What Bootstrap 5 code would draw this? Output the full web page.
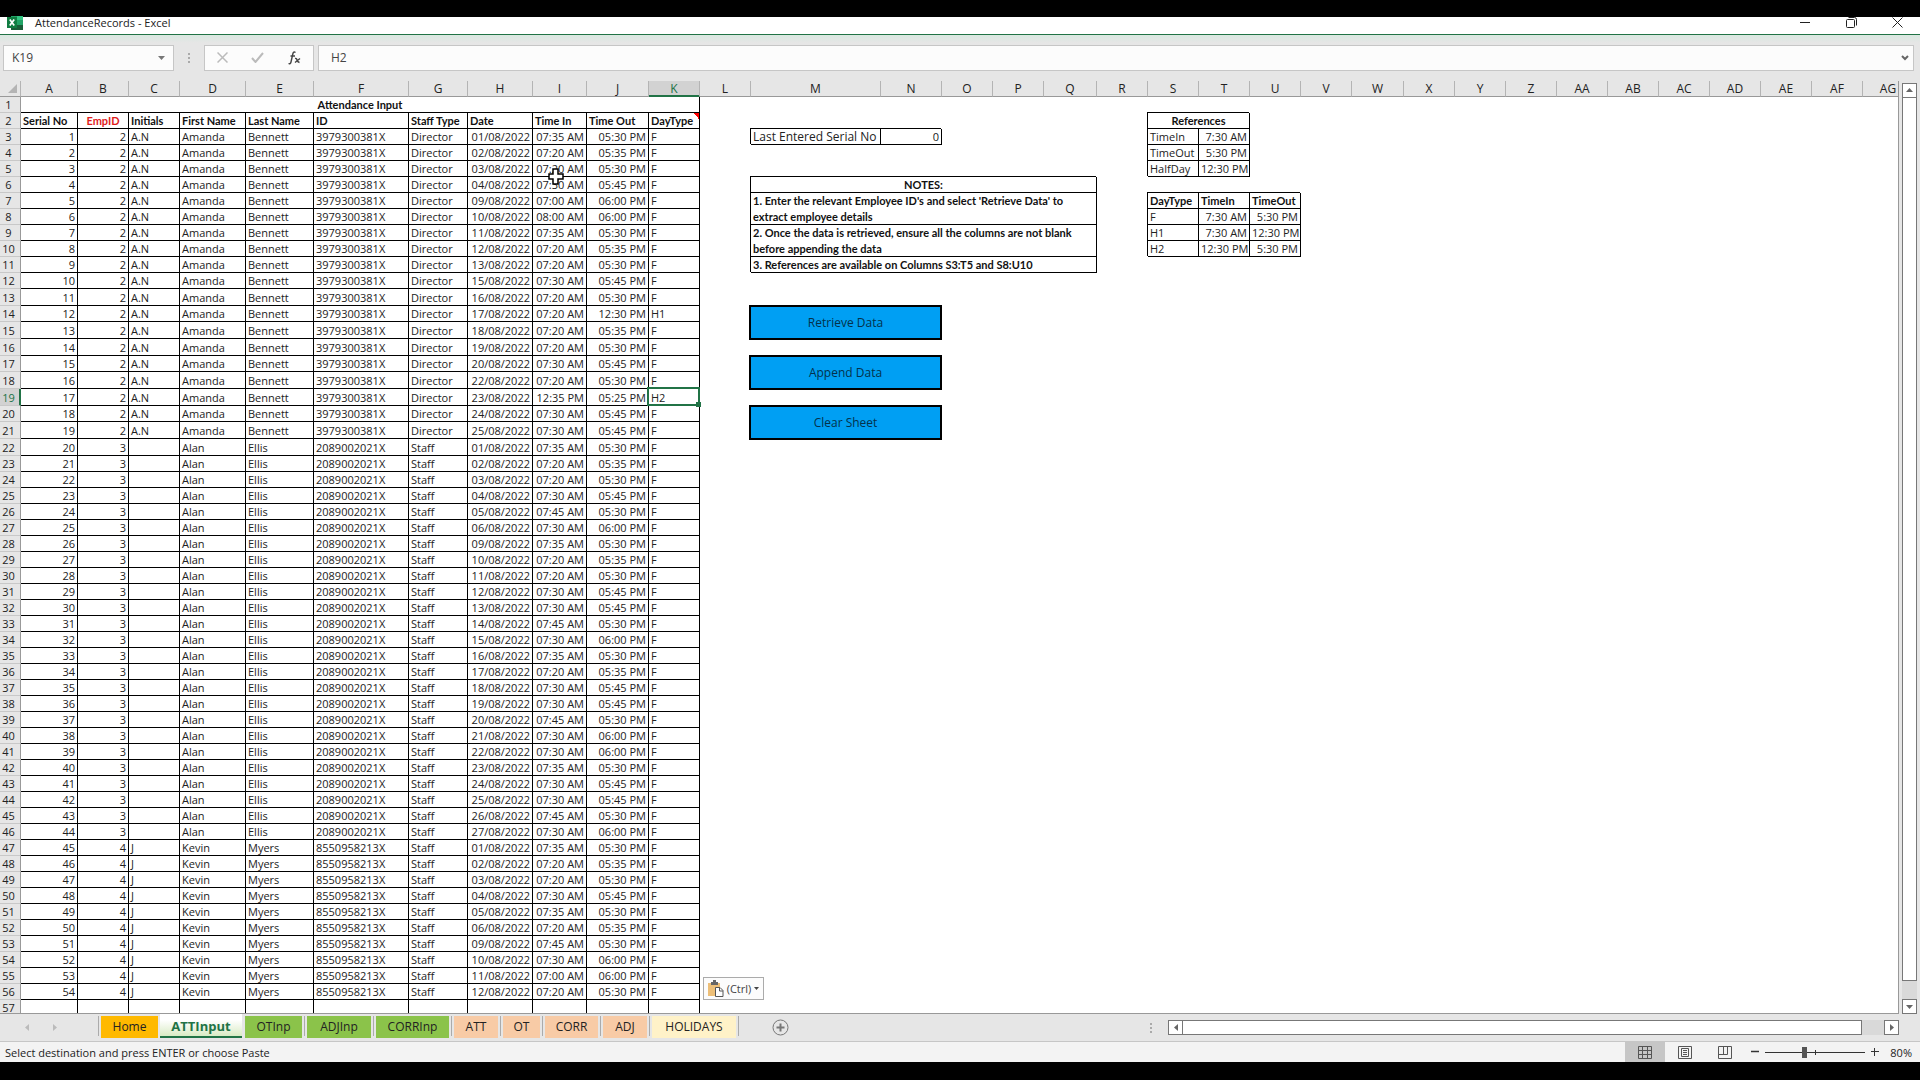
<!DOCTYPE html>
<html lang="en">
<head>
<meta charset="utf-8">
<meta name="viewport" content="width=device-width, initial-scale=1">
<title>AttendanceRecords - Excel</title>
<link href="https://cdn.jsdelivr.net/npm/bootstrap@5.3.0/dist/css/bootstrap.min.css" rel="stylesheet">
<script src="https://cdn.jsdelivr.net/npm/bootstrap@5.3.0/dist/js/bootstrap.bundle.min.js"></script>
<style>
  :root { --xl: #217346; --chrome: #e6e6e6; --edge: #999; }
  body { font: 11px/15px "Open Sans", "Noto Sans", sans-serif; color: #222; background: #000; padding: 17px 0 18px; }
  button { color: inherit; }
  .plain { border: 0; background: none; padding: 0; display: flex; align-items: center; justify-content: center; }
  .app { background: var(--chrome); }

  .titlebar { height: 18px; background: #fff; border-bottom: 1px solid var(--xl); padding: 0 8px 6px 7px; }
  .titlebar .plain { width: 46px; }
  .winbtns { margin-right: -8px; }
  .fxbar { padding: 10px 6px 10px 3px; height: 46px; background: linear-gradient(#d9e8e0, var(--chrome) 8px); }
  .fxbox { background: #fcfcfc; border: 1px solid #c6c6c6; }
  .fxbox input { border: 0; background: none; font-size: 12px; color: #444; outline: 0; min-width: 0; }
  .namebox { width: 171px; }
  .fxtools { width: 110px; }
  .gripdots { width: 30px; }

  .gridwrap { border-right: 1px solid var(--edge); border-bottom: 1px solid var(--edge); background: #fff; }
  .sheet { table-layout: fixed; width: 1914px; border-collapse: separate; border-spacing: 0; }
  .sheet th, .sheet td { padding: 0 2px; height: 16px; white-space: nowrap; font-weight: 400; vertical-align: bottom; overflow: hidden; }
  .sheet tr.tall > * { height: 17px; }
  .sheet thead th { background: var(--chrome); text-align: center; font-size: 12px; border-right: 1px solid #b4b4b4; border-bottom: 1px solid var(--edge); }
  .sheet thead th.active { background: #d2d2d2; color: var(--xl); border-bottom-color: var(--xl); box-shadow: inset 0 -1px var(--xl); }
  .sheet tbody th { background: var(--chrome); text-align: center; padding: 0 4px 0 1px; border-right: 1px solid var(--edge); border-bottom: 1px solid #c8c8c8; }
  .sheet tbody th.active { background: #d2d2d2; color: var(--xl); border-right: 2px solid var(--xl); padding-right: 3px; }
  .sheet .cellbox { border-right: 1px solid #000; border-bottom: 1px solid #000; }
  .sheet .side { box-shadow: -1px -1px 0 #000; }
  .sheet .hd { font-family: Lato, "Open Sans", sans-serif; font-weight: 700; color: #111; }
  .sheet .redhd { color: #e01b1b; }
  .sheet .wide { font-size: 12px; }
  .sheet .wraps { white-space: normal; vertical-align: top; }
  .wraps div { line-height: 16px; margin-bottom: -1px; }
  .sheet td.over { overflow: visible; position: relative; }
  .notemark { background: linear-gradient(to top right, transparent 50%, #f00 50%) no-repeat right top / 6px 6px; }
  .actioncell button { position: absolute; inset: -1px 0 -1px -2px; background: #009ff3; color: #04324c; border: 2px solid #000; font-size: 12px; border-radius: 0; padding: 0; }
  .cursel { position: absolute; inset: -2px -1px -1px -2px; border: 2px solid var(--xl); }
  .cursel::after { content: ""; position: absolute; right: -3px; bottom: -3px; width: 5px; height: 5px; background: var(--xl); }
  .pointer { position: absolute; left: 548px; top: 87px; }
  .pastebtn { position: absolute; left: 703px; bottom: 13px; height: 23px; width: 61px; background: #fcfcfc; border: 1px solid #ababab; font-size: 11px; color: #444; gap: 3px; }

  .vscroll { width: 21px; padding: 2px 3px 0 3px; }
  .sbtn { width: 15px; height: 15px; background: #fff; border: 1px solid #777; padding: 0; display: flex; align-items: center; justify-content: center; flex: none; }
  .strack { background: #d9d9d9; }
  .vthumb { background: #fff; border: 1px solid #777; margin-bottom: 18px; margin-top: -1px; }
  .hthumb { background: #fff; border: 1px solid #777; margin-right: 22px; margin-left: -1px; }
  .hscroll { width: 731px; margin-right: 21px; }

  .tabbar { height: 28px; border-bottom: 1px solid #c6c6c6; }
  .tabnav { width: 98px; padding-left: 25px; gap: 24px; }
  .tabs { list-style: none; margin: 0; padding: 0; }
  .tabs li { border-left: 1px solid #ababab; padding: 0 2px; height: 20px; margin: 2px 0 6px; display: flex; }
  .tabs li:last-child { border-right: 1px solid #ababab; }
  .tabs a { display: block; height: 22px; line-height: 22px; font-size: 12px; color: #222; text-decoration: none; text-align: center; }
  .tabs .home { background: #ffb900; width: 57px; }
  .tabs .green { background: #8bc34a; }
  .tabs .peach { background: #f8cba6; }
  .tabs .cream { background: #fff2c8; width: 84px; }
  .tabs li.on { border: 0; padding: 0; margin: -1px 0 0; }
  .tabs li.on + li { border-left-color: transparent; }
  .tabs .on a { height: 25px; line-height: 26px; width: 82px; font-size: 13px; font-weight: 700; color: var(--xl); border-bottom: 2px solid var(--xl); background: linear-gradient(#fff 30%, #d9ebc4); }
  .w57 { width: 57px; } .w64 { width: 64px; } .w73 { width: 73px; } .w44 { width: 44px; } .w37 { width: 37px; } .w53 { width: 53px; }
  .addtab { margin-left: 33px; }

  .statusbar { height: 20px; background: #f3f3f3; padding: 0 8px 0 5px; }
  .viewbtn { width: 40px; height: 20px; }
  .viewbtn.on { background: #c6c6c6; }
  .zoombtn { width: 20px; height: 20px; }
  .zoomer { appearance: none; width: 100px; height: 19px; margin: 0; background: linear-gradient(#333, #333) no-repeat center / 100% 1px, linear-gradient(#333, #333) no-repeat center / 1px 5px; }
  .zoomer::-webkit-slider-thumb { appearance: none; width: 5px; height: 11px; background: #555; }
  .zoomval { width: 27px; text-align: right; }
</style>
</head>
<body class="vh-100 overflow-hidden">
<div class="app h-100 d-flex flex-column">

  <header class="titlebar d-flex align-items-center">
    <svg width="16" height="14" viewBox="0 0 16 14" aria-hidden="true"><path fill="#21a366" d="M4 0h12v14H4z"/><path fill="#107c41" d="M4 4h6v5H4z"/><path fill="#33c481" d="M10 0h6v4h-6z"/><path fill="#185c37" d="M4 9h12v5H4z"/><path fill="#107c41" d="M0 1h10v11H0z"/><path stroke="#fff" stroke-width="1.7" d="M2.8 3.4l4.4 6.2M7.2 3.4L2.8 9.6"/></svg>
    <span class="ms-2 ps-1 flex-grow-1">AttendanceRecords - Excel</span>
    <div class="winbtns d-flex">
      <button class="plain" aria-label="Minimize"><svg width="11" height="11"><path d="M0 5.500h10" stroke="#222"/></svg></button>
      <button class="plain" aria-label="Restore"><svg width="11" height="11" fill="none" stroke="#222"><rect x=".5" y="2.500" width="8" height="8" rx="1"/><path d="M2.500 .5h6q2 0 2 2v6"/></svg></button>
      <button class="plain" aria-label="Close"><svg width="11" height="11"><path d="M.5.5l10 10M10.500.5l-10 10" stroke="#222"/></svg></button>
    </div>
  </header>

  <div class="fxbar d-flex">
    <div class="fxbox namebox d-flex align-items-center">
      <input class="flex-grow-1 ps-2" aria-label="Name box" value="K19">
      <button class="plain px-2" aria-label="Names"><svg width="7" height="4"><path d="M0 0h7L3.500 4z" fill="#777"/></svg></button>
    </div>
    <div class="gripdots d-flex align-items-center justify-content-center"><svg width="2" height="10" fill="#aaa"><path d="M0 0h2v2H0zM0 4h2v2H0zM0 8h2v2H0z"/></svg></div>
    <div class="fxbox fxtools d-flex align-items-center justify-content-around">
      <button class="plain" aria-label="Cancel"><svg width="11" height="11"><path d="M.5.5l10 10M10.500.5l-10 10" stroke="#bbb" stroke-width="1.500"/></svg></button>
      <button class="plain" aria-label="Enter"><svg width="13" height="11" fill="none"><path d="M1 6l3.500 4L12 1" stroke="#bbb" stroke-width="2"/></svg></button>
      <button class="plain" aria-label="Insert function"><svg width="13" height="14" fill="none" stroke="#444" stroke-width="1.400"><path d="M7.500 1.500Q5.500 0 4.800 3L3 11Q2.400 13.500.5 12.500M2.500 5h4.500M7 7.500q1.500-.5 2 1.500t2.500 2.500M12 7.500L7 11.500"/></svg></button>
    </div>
    <div class="fxbox flex-grow-1 d-flex align-items-center ms-1">
      <input class="flex-grow-1 ps-2 ms-1" aria-label="Formula bar" value="H2">
      <button class="plain px-1" aria-label="Expand formula bar"><svg width="8" height="6" fill="none"><path d="M1 1l3 3 3-3" stroke="#666" stroke-width="2"/></svg></button>
    </div>
  </div>

  <main class="flex-grow-1 d-flex overflow-hidden">
    <div class="gridwrap flex-grow-1 overflow-hidden position-relative">
      <table class="sheet"><colgroup id="cols"></colgroup><thead><tr id="letters"></tr></thead><tbody id="rows"></tbody></table>
      <svg class="pointer" width="16" height="17" viewBox="0 0 16 17"><path d="M5 1h5v5h5v5h-5v5H5v-5H1V6h4z" fill="#fff" stroke="#000" stroke-width="1.500"/></svg>
      <button class="pastebtn d-flex align-items-center justify-content-center p-0">
        <svg width="16" height="17" viewBox="0 0 16 17"><path fill="#edbf78" d="M0 3h12v13H0z"/><path fill="#666" d="M3 2h2V0h3v2h2v3H3z"/><path fill="#fff" stroke="#555" d="M7.500 7.500h4.500l3 3v6H7.500z"/><path fill="none" stroke="#555" d="M11.500 7.500v3.500H15"/></svg>
        <span>(Ctrl)</span><svg width="5" height="3"><path d="M0 0h5L2.500 3z" fill="#444"/></svg>
      </button>
    </div>
    <div class="vscroll d-flex flex-column">
      <button class="sbtn" aria-label="Scroll up"><svg width="7" height="4"><path d="M0 4h7L3.500 0z" fill="#666"/></svg></button>
      <div class="strack flex-grow-1 d-flex flex-column"><div class="vthumb flex-grow-1"></div></div>
      <button class="sbtn" aria-label="Scroll down"><svg width="7" height="4"><path d="M0 0h7L3.500 4z" fill="#666"/></svg></button>
    </div>
  </main>

  <nav class="tabbar d-flex align-items-start" aria-label="Sheets">
    <div class="tabnav d-flex h-100 align-items-center">
      <button class="plain" aria-label="Previous sheet"><svg width="4" height="7"><path d="M4 0v7L0 3.500z" fill="#bbb"/></svg></button>
      <button class="plain" aria-label="Next sheet"><svg width="4" height="7"><path d="M0 0v7l4-3.500z" fill="#bbb"/></svg></button>
    </div>
    <ul class="tabs d-flex">
      <li><a href="#" class="home">Home</a></li>
      <li class="on"><a href="#" aria-current="page">ATTInput</a></li>
      <li><a href="#" class="green w57">OTInp</a></li>
      <li><a href="#" class="green w64">ADJInp</a></li>
      <li><a href="#" class="green w73">CORRInp</a></li>
      <li><a href="#" class="peach w44">ATT</a></li>
      <li><a href="#" class="peach w37">OT</a></li>
      <li><a href="#" class="peach w53">CORR</a></li>
      <li><a href="#" class="peach w44">ADJ</a></li>
      <li><a href="#" class="cream">HOLIDAYS</a></li>
    </ul>
    <button class="plain addtab h-100" aria-label="New sheet"><svg width="17" height="17" fill="none" stroke="#777"><circle cx="8.500" cy="8.500" r="7.500"/><path d="M4.500 8.500h8M8.500 4.500v8" stroke-width="2"/></svg></button>
    <div class="ms-auto d-flex h-100 align-items-center">
      <svg class="me-3" width="2" height="10" fill="#aaa"><path d="M0 0h2v2H0zM0 4h2v2H0zM0 8h2v2H0z"/></svg>
      <div class="hscroll d-flex">
        <button class="sbtn" aria-label="Scroll left"><svg width="4" height="7"><path d="M4 0v7L0 3.500z" fill="#666"/></svg></button>
        <div class="strack flex-grow-1 d-flex"><div class="hthumb flex-grow-1"></div></div>
        <button class="sbtn" aria-label="Scroll right"><svg width="4" height="7"><path d="M0 0v7l4-3.500z" fill="#666"/></svg></button>
      </div>
    </div>
  </nav>

  <footer class="statusbar d-flex align-items-center">
    <span class="flex-grow-1">Select destination and press ENTER or choose Paste</span>
    <button class="plain viewbtn on" aria-label="Normal view"><svg width="14" height="13" fill="none" stroke="#555"><path d="M.5.5h13v12H.5zM.5 4.500h13M.5 8.500h13M4.500.5v12M9.500.5v12"/></svg></button>
    <button class="plain viewbtn" aria-label="Page layout"><svg width="14" height="13" fill="none" stroke="#555"><path d="M.5.5h13v12H.5zM3.500 2.500h7v8h-7zM5 4.500h4M5 6.500h4M5 8.500h4"/></svg></button>
    <button class="plain viewbtn" aria-label="Page break preview"><svg width="14" height="13" fill="none" stroke="#555"><path d="M.5.5h13v12H.5zM.5 8.500h9v-8M5.500.5v8"/></svg></button>
    <button class="plain zoombtn" aria-label="Zoom out"><svg width="8" height="8"><path d="M0 3.500h8" stroke="#333" stroke-width="1.500"/></svg></button>
    <input class="zoomer" type="range" min="0" max="100" value="39" aria-label="Zoom">
    <button class="plain zoombtn" aria-label="Zoom in"><svg width="8" height="8"><path d="M0 3.500h8M3.500 0v8" stroke="#333"/></svg></button>
    <span class="zoomval">80%</span>
  </footer>
</div>

<script>
const widths = [21,57,51,51,66,68,95,59,65,54,62,51,51,130,61,51,51,53,51,51,51,51,51,52,51,51,51,51,51,51,51,51,51,51];
const letters = [...'ABCDEFGHIJKLMNOPQRSTUVWXYZ'].concat(['AA','AB','AC','AD','AE','AF','AG']);
const tall = [13,15,16,18,19,21,22];

// day, time in, time out, optional day type
const people = [
  [2,'A.N','Amanda','Bennett','3979300381X','Director',
   '01 0735 0530,02 0720 0535,03 0720 0530,04 0730 0545,09 0700 0600,10 0800 0600,11 0735 0530,12 0720 0535,13 0720 0530,15 0730 0545,16 0720 0530,17 0720 1230 H1,18 0720 0535,19 0720 0530,20 0730 0545,22 0720 0530,23 1235 0525 H2,24 0730 0545,25 0730 0545'],
  [3,'','Alan','Ellis','2089002021X','Staff',
   '01 0735 0530,02 0720 0535,03 0720 0530,04 0730 0545,05 0745 0530,06 0730 0600,09 0735 0530,10 0720 0535,11 0720 0530,12 0730 0545,13 0730 0545,14 0745 0530,15 0730 0600,16 0735 0530,17 0720 0535,18 0730 0545,19 0730 0545,20 0745 0530,21 0730 0600,22 0730 0600,23 0735 0530,24 0730 0545,25 0730 0545,26 0745 0530,27 0730 0600'],
  [4,'J','Kevin','Myers','8550958213X','Staff',
   '01 0735 0530,02 0720 0535,03 0720 0530,04 0730 0545,05 0735 0530,06 0720 0535,09 0745 0530,10 0730 0600,11 0700 0600,12 0720 0530']
];
const clock = t => t.slice(0, 2) + ':' + t.slice(2);
const records = [];
for (const [id, ini, first, last, nid, type, days] of people)
  for (const d of days.split(',')) {
    const [day, tin, tout, kind = 'F'] = d.split(' ');
    records.push([records.length + 1, id, ini, first, last, nid, type, day + '/08/2022',
      clock(tin) + (tin[0] === '1' ? ' PM' : ' AM'), clock(tout) + ' PM', kind]);
  }

// other cells, by address: [text, classes, colspan, rowspan]
const S = 'cellbox side ', E = S + 'text-end', H = S + 'hd';
const act = t => ['<button>' + t + '</button>', 'over actioncell', 2, 2];
const cells = {
  A1: ['Attendance Input', 'cellbox hd text-center', 11, 1],
  M3: ['Last Entered Serial No', S + 'wide'], N3: ['0', E],
  M6: ['NOTES:', H + ' text-center', 5],
  M7: ["<div>1. Enter the relevant Employee ID's and select 'Retrieve Data' to extract employee details</div>", H + ' wraps', 5, 2],
  M9: ['<div>2. Once the data is retrieved, ensure all the columns are not blank before appending the data</div>', H + ' wraps', 5, 2],
  M11: ['3. References are available on Columns S3:T5 and S8:U10', H, 5],
  M14: act('Retrieve Data'), M17: act('Append Data'), M20: act('Clear Sheet'),
  S2: ['References', H + ' text-center', 2],
  S3: ['TimeIn', S], T3: ['7:30 AM', E], S4: ['TimeOut', S], T4: ['5:30 PM', E], S5: ['HalfDay', S], T5: ['12:30 PM', E],
  S7: ['DayType', H], T7: ['TimeIn', H], U7: ['TimeOut', H],
  S8: ['F', S], T8: ['7:30 AM', E], U8: ['5:30 PM', E],
  S9: ['H1', S], T9: ['7:30 AM', E], U9: ['12:30 PM', E],
  S10: ['H2', S], T10: ['12:30 PM', E], U10: ['5:30 PM', E]
};
const heads = ['Serial No','EmpID','Initials','First Name','Last Name','ID','Staff Type','Date','Time In','Time Out','DayType'];
heads.forEach((h, i) => cells[letters[i] + 2] = [h, 'cellbox hd' + (i === 1 ? ' text-center redhd' : i === 10 ? ' notemark' : '')]);
for (let r = 3; r <= 57; r++) for (let c = 0; c < 11; c++) {
  const v = records[r - 3] ? records[r - 3][c] : '';
  cells[letters[c] + r] = [v, 'cellbox' + ([0, 1, 7, 8, 9].includes(c) ? ' text-end' : '')];
}
cells.K19 = ['H2<div class="cursel"></div>', 'cellbox over'];

document.getElementById('cols').innerHTML = widths.map(w => `<col style="width:${w}px">`).join('');
document.getElementById('letters').innerHTML =
  '<th class="p-0"><svg width="20" height="15" class="d-block"><path d="M17 3v9H8z" fill="#b4b4b4"/></svg></th>' +
  letters.map(l => `<th${l === 'K' ? ' class="active"' : ''}>${l}</th>`).join('');
const taken = new Set();
let html = '';
for (let r = 1; r <= 57; r++) {
  html += `<tr${tall.includes(r) ? ' class="tall"' : ''}><th${r === 19 ? ' class="active"' : ''}>${r}</th>`;
  letters.forEach((l, c) => {
    if (taken.has(c + ',' + r)) return;
    const [text = '', cls = '', cs = 1, rs = 1] = cells[l + r] || [];
    for (let y = 0; y < rs; y++) for (let x = 0; x < cs; x++) taken.add((c + x) + ',' + (r + y));
    html += `<td class="${cls}" colspan="${cs}" rowspan="${rs}">${text}</td>`;
  });
  html += '</tr>';
}
document.getElementById('rows').innerHTML = html;
</script>
</body>
</html>
